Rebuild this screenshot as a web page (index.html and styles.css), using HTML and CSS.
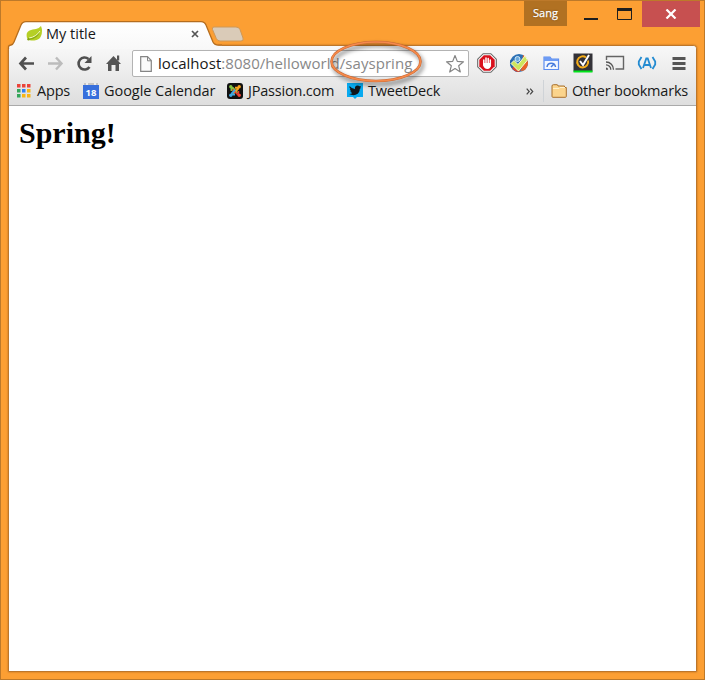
FILE: index.html
```html
<!DOCTYPE html>
<html lang="en">
<head>
<meta charset="utf-8">
<title>My title</title>
<link rel="stylesheet" href="styles.css">
</head>
<body>
<div class="window">
  <header class="strip">
    <div class="tab">
      <svg class="tab-shape" width="214" height="28" viewBox="0 0 214 28">
        <defs><linearGradient id="tg" x1="0" y1="0" x2="0" y2="1"><stop offset="0" stop-color="#fff"/><stop offset="1" stop-color="#f8f8f8"/></linearGradient></defs>
        <path d="M0 28V27Q0 24.500 3 24Q5 23.500 6 21L13 4Q14.500 .8 18 .8H193Q196.500 .8 198 4L205 21Q206.500 24.500 211 24.500H214V28Z" fill="url(#tg)"/>
        <path d="M.5 28V27Q0 24.500 3 24Q5 23.500 6 21L13 4Q14.500 .7 18 .7H193Q196.500 .7 198 4L205 21Q206.500 24.200 211 24.200H214" fill="none" stroke="#b56d1e" stroke-width="1.300"/>
      </svg>
      <svg class="leaf" width="17" height="16" viewBox="0 0 17 16"><path d="M1 12C-1 4 5 4 10 3Q13 2.500 15 0Q17 5 15 10C13 15 7 15 3 14Z" fill="#b5cf25"/><path d="M2 12Q10 11 14 5Q12 13 3 14Z" fill="#8cac13"/><path d="M3 12Q10 11 14 5" fill="none" stroke="#f5fac7" stroke-width="1"/><circle cx="2.500" cy="13.300" r="1.200" fill="#84a510"/></svg>
      <span class="text title">My title</span>
      <svg class="close-tab" width="8" height="8" viewBox="0 0 8 8"><path d="M1 1L7 7M7 1L1 7" stroke="#555" stroke-width="1.700"/></svg>
    </div>
    <svg class="new-tab" width="34" height="18" viewBox="0 0 34 18"><path d="M3 2H25Q28 2 29 4.500L32 13Q33 16 30 16H9Q6.500 16 5.300 13.500L1.500 4.500Q.7 2 3 2Z" fill="#dacbb8" stroke="#cf9857" stroke-width="1"/></svg>
    <div class="user">Sang</div>
    <svg class="controls" width="74" height="26" viewBox="0 0 74 26"><path d="M17 18h14" stroke="#1e1e1e" stroke-width="2"/><path d="M50.500 7.500h14v11h-14z" fill="none" stroke="#1e1e1e"/><path d="M50 8.500h15" stroke="#1e1e1e" stroke-width="3"/></svg>
    <div class="close"><svg width="12" height="10" viewBox="0 0 12 10"><path d="M1.500 .5L10.500 9.500M10.500 .5L1.500 9.500" stroke="#fff" stroke-width="2.200"/></svg></div>
  </header>

  <main class="frame">
    <div class="chrome">
      <div class="toolbar">
        <svg class="nav" width="123" height="34" viewBox="0 0 123 34">
          <path d="M12 17.500H25M17 11.500L11.500 17.500L17 23.500" fill="none" stroke="#505050" stroke-width="2.700"/>
          <path d="M39 17.500H52M47 11.500L52.500 17.500L47 23.500" fill="none" stroke="#bcbcbc" stroke-width="2.400"/>
          <path d="M80.500 21A6 6 0 1 1 79.500 13" fill="none" stroke="#505050" stroke-width="2.600"/><path d="M82.500 10V17H75.500Z" fill="#505050"/>
          <path d="M97 18L104.500 10L112 18H110V25H106.500V19H102.500V25H99V18Z" fill="#555"/><path d="M108 9.500h2.200v5H108z" fill="#555"/>
        </svg>
        <div class="omnibox">
          <svg width="12" height="16" viewBox="0 0 12 16"><path d="M.7 .7H7.500L11.300 4.500V15.300H.7Z" fill="#fafafa" stroke="#858585" stroke-width="1.200"/><path d="M7.500 1V4.800H11" fill="none" stroke="#858585"/></svg>
          <span class="text url">localhost<span>:8080/helloworld/sayspring</span></span>
          <svg class="star" width="20" height="20" viewBox="0 0 20 20"><path d="M10 1.500L12.300 7.400L18.500 7.800L13.700 11.800L15.300 18L10 14.600L4.700 18L6.300 11.800L1.500 7.800L7.700 7.400Z" fill="#fff" stroke="#858585" stroke-width="1.200" stroke-linejoin="round"/></svg>
          <svg class="ring" width="100" height="52" viewBox="0 0 100 52"><ellipse cx="48" cy="23.500" rx="44.500" ry="19.500" fill="none" stroke="#c96731" stroke-width="2.600"/><ellipse cx="48" cy="23.500" rx="44.500" ry="19.500" fill="none" stroke="#f58a4c" stroke-width="1.600"/></svg>
        </div>
        <div class="extensions">
          <svg width="20" height="20" viewBox="0 0 20 20"><path d="M6.200 .7H13.800L19.300 6.200V13.800L13.800 19.300H6.200L.7 13.800V6.200Z" fill="#fff" stroke="#666" stroke-width="1.100"/><path d="M6.800 2.300H13.200L17.700 6.800V13.200L13.200 17.700H6.800L2.300 13.200V6.800Z" fill="#d9101c"/><path d="M6.800 7v5M9 5v7M11.200 5.500v7M13.300 7v6" stroke="#fff" stroke-width="1.500" stroke-linecap="round"/><path d="M6 10H14V12Q13.500 16 10.500 16Q7 16 6 12Z" fill="#fff"/></svg>
          <svg width="20" height="20" viewBox="0 0 20 20"><circle cx="10" cy="10" r="9" fill="#2b70b5"/><path d="M14 2A9 9 0 0 1 15 17.500L12 18Z" fill="#e96428"/><path d="M1.500 7A9 9 0 0 0 9 19L10 15L4 7Z" fill="#2461a5"/><path d="M3 15A9 9 0 0 0 10 19L12 17L6 13Z" fill="#dd4930"/><circle cx="8.500" cy="6" r="2.500" fill="#67a8dc" stroke="#d2e9f8"/><path d="M2 10.500L5 7.500L9 11.500L16 3L18.500 7L9.500 18Z" fill="#cfe65c" stroke="#f5fbd8"/></svg>
          <svg width="20" height="20" viewBox="0 0 20 20"><path d="M3 16.500V4H9L10.500 6H17.500V16.500Z" fill="#f4f8ff" stroke="#5b8df0" stroke-width="1.200"/><path d="M3 4H9L10.500 6H17V8H3Z" fill="#6d9bf4"/><path d="M6 14A4.300 4.300 0 0 1 14.500 14M10 14L13 11" fill="none" stroke="#467bdc" stroke-width="1.500"/></svg>
          <svg width="20" height="20" viewBox="0 0 20 20"><path d="M.5 .5h19v18H.5z" fill="#333238"/><path d="M.5 17.500h19v2H.5z" fill="#00e51b"/><path d="M13 4.500A5.500 5.500 0 1 0 15 7.500" fill="none" stroke="#f5ad19" stroke-width="2"/><path d="M7 8L10 12L16 2" fill="none" stroke="#fff" stroke-width="2"/></svg>
          <svg width="20" height="20" viewBox="0 0 20 20"><path d="M1.500 7V3.500H18.500V16H10.500" fill="none" stroke="#656565" stroke-width="1.400"/><path d="M1 9A7.500 7.500 0 0 1 8.500 16.700M1 11.800A4.800 4.800 0 0 1 5.800 16.700" fill="none" stroke="#555" stroke-width="1.300"/><path d="M1 14.500Q3 14.500 3.200 16.700H1Z" fill="#555"/></svg>
          <svg width="20" height="20" viewBox="0 0 20 20"><path d="M4.500 4L1.800 8.500V11.500L4.500 16M15.500 4L18.200 8.500V11.500L15.500 16M6 15L9.300 5.500H10.700L14 15M7.300 12H12.700" fill="none" stroke="#238bd1" stroke-width="1.800"/></svg>
          <svg width="20" height="20" viewBox="0 0 20 20"><path d="M3.500 5.500H16.500M3.500 10.500H16.500M3.500 15.500H16.500" stroke="#555" stroke-width="2.800"/></svg>
        </div>
      </div>
      <nav class="bookmarks">
        <a class="apps"><svg width="14" height="14" viewBox="0 0 14 14"><path d="M0 0h3.500v3.500H0zM5 0h3.500v3.500H5zM10 0h3.500v3.500H10z" fill="#eb4339"/><path d="M0 5h3.500v3.500H0zM0 10h3.500v3.500H0z" fill="#35a65a"/><path d="M5 5h3.500v3.500H5z" fill="#2f80f4"/><path d="M10 5h3.500v3.500H10zM5 10h3.500v3.500H5zM10 10h3.500v3.500H10z" fill="#f7b616"/></svg><span class="text">Apps</span></a>
        <a class="calendar"><svg width="16" height="16" viewBox="0 0 16 16"><path d="M1 0H15V5H1Z" fill="#c5c5c5"/><path d="M3 0h2v2H3zM11 0h2v2h-2z" fill="#eee"/><path d="M0 2H16V16H0Z" fill="#376fdc"/><text class="day" x="8" y="13" text-anchor="middle">18</text></svg><span class="text">Google Calendar</span></a>
        <a class="passion"><svg width="16" height="16" viewBox="0 0 16 16"><rect width="16" height="16" rx="3" fill="#111"/><path d="M4.500 8V6Q4.500 4.500 6 5L10.500 10" fill="none" stroke="#83c341" stroke-width="2"/><path d="M8 4.800H10Q11.500 5 11 6L6 10.500" fill="none" stroke="#f9a11b" stroke-width="2"/><path d="M11.500 8V10Q11 11.500 10 11L5.500 6.500" fill="none" stroke="#ec3b32" stroke-width="1.500"/><path d="M8 11.500H6Q4.500 11 5 10L8 7" fill="none" stroke="#3da8e5" stroke-width="1.800"/><circle cx="3.800" cy="3.800" r="1.700" fill="#83c341"/><circle cx="12.200" cy="3.800" r="1.700" fill="#f9a11b"/><circle cx="3.800" cy="12.200" r="1.700" fill="#3da8e5"/><circle cx="12.200" cy="12.200" r="1.700" fill="#f04535"/></svg><span class="text">JPassion.com</span></a>
        <a class="deck"><svg width="16" height="16" viewBox="0 0 16 16"><path d="M0 0H16V14H10L8 16L6 14H0Z" fill="#08aaf0"/><path d="M2.500 3Q5 6 8 6Q7.500 2.500 10.500 2.500Q12 2.500 12.500 3.300L14 3L13.200 4.500L14 4.800L12.800 6C12.500 12 6.500 13.500 2 11Q4.500 11 5.300 10Q3.500 9.500 3.300 8.300H4.500Q2.800 7.500 2.800 6L3.800 6.200Q2 4.800 2.500 3Z" fill="#10151a"/></svg><span class="text">TweetDeck</span></a>
        <svg class="more" width="8" height="7" viewBox="0 0 8 7"><path d="M.7 .7L3.200 3.500L.7 6.300M4.200 .7L6.700 3.500L4.200 6.300" fill="none" stroke="#444" stroke-width="1.200"/></svg>
        <a class="other"><svg width="16" height="14" viewBox="0 0 16 14"><path d="M1 12.500V2Q1 .7 2.500 .7H6Q7 .7 7 2H13.500V3.500H15.300V12.500Q15.300 13.300 14.300 13.300H2Q1 13.300 1 12.500Z" fill="#fbd48c" stroke="#a9702d"/><path d="M2 4.500H8L9 3.500H14" fill="none" stroke="#fff0cc"/></svg><span class="text">Other bookmarks</span></a>
      </nav>
    </div>
    <section class="page"><h1>Spring!</h1></section>
  </main>
</div>
</body>
</html>
```
FILE: styles.css
```css
* { box-sizing: border-box; }
body { margin: 0; }
svg { display: block; flex: none; }
.window { width: 705px; height: 680px; background: #fc9f33; border: 1px solid #bd792a; padding: 0 7px 7px; display: flex; flex-direction: column; }
.strip { height: 44px; flex: none; display: flex; align-items: flex-start; margin-right: -3px; }
.tab { position: relative; z-index: 1; width: 203px; height: 28px; margin-top: 20px; padding-left: 18px; display: flex; align-items: center; flex: none; }
.tab-shape { position: absolute; left: 0; top: 0; }
.leaf, .title, .close-tab { position: relative; }
.text { font: 14.500px/20px "Open Sans", sans-serif; color: #181818; white-space: nowrap; letter-spacing: -.2px; }
.title { width: 144px; margin-left: 3px; margin-top: -3px; letter-spacing: 0; }
.leaf { margin-top: -2px; }
.close-tab { margin-left: 1px; margin-top: -2px; }
.new-tab { margin: 24px 0 0; }
.user { margin-left: auto; width: 43px; height: 25px; background: #b17122; color: #fff; font: 11px/24px "Open Sans", sans-serif; text-align: center; text-shadow: 0 0 2px #5b390e; -webkit-text-stroke: .25px #fff; }
.close { width: 58px; height: 26px; margin-left: 1px; background: #c75050; display: flex; align-items: center; justify-content: center; }
.close svg { margin-right: 1px; }
.frame { flex: 1; display: flex; flex-direction: column; background: #fff; border: 1px solid #bd762a; border-radius: 4px 4px 0 0; box-shadow: 0 0 2px #a7651e; }
.chrome { height: 60px; flex: none; background: linear-gradient(#f8f8f8, #dedede); border-bottom: 1px solid #aaa; border-radius: 3px 3px 0 0; }
.toolbar { height: 33px; display: flex; align-items: center; }
.omnibox { position: relative; width: 337px; height: 27px; margin-top: 2px; background: #fff; border: 1px solid #b3b3b3; border-radius: 2px; padding: 0 3px 0 7px; display: flex; align-items: center; flex: none; }
.url { margin-left: 6px; margin-top: -1px; letter-spacing: .05px; font-size: 15px; }
.url span { color: #888; }
.star { margin-left: auto; }
.ring { position: absolute; left: 195px; top: -13px; filter: drop-shadow(2px 3px 2px #0008); }
.extensions { display: flex; gap: 12px; margin-left: 8px; margin-top: 1px; }
.bookmarks { height: 24px; display: flex; align-items: center; padding: 0 7px 0 8px; }
.bookmarks a { display: flex; align-items: center; gap: 6px; height: 22px; }
.bookmarks .text { margin-top: -1px; }
.apps { width: 66px; }
.bookmarks .calendar { width: 144px; gap: 5px; }
.calendar .text { letter-spacing: -.05px; }
.bookmarks .passion { width: 120px; gap: 5px; }
.bookmarks .deck { gap: 5px; }
.day { font: bold 9.500px "Open Sans", sans-serif; fill: #fff; }
.more { margin-left: auto; margin-right: 9px; }
.bookmarks .other { width: 146px; border-left: 1px solid #cfd3d7; padding-left: 7px; gap: 5px; }
.page { flex: 1; }
h1 { margin: 9px 0 0 10px; font: bold 30px/36px "Liberation Serif", serif; color: #000; }
```
